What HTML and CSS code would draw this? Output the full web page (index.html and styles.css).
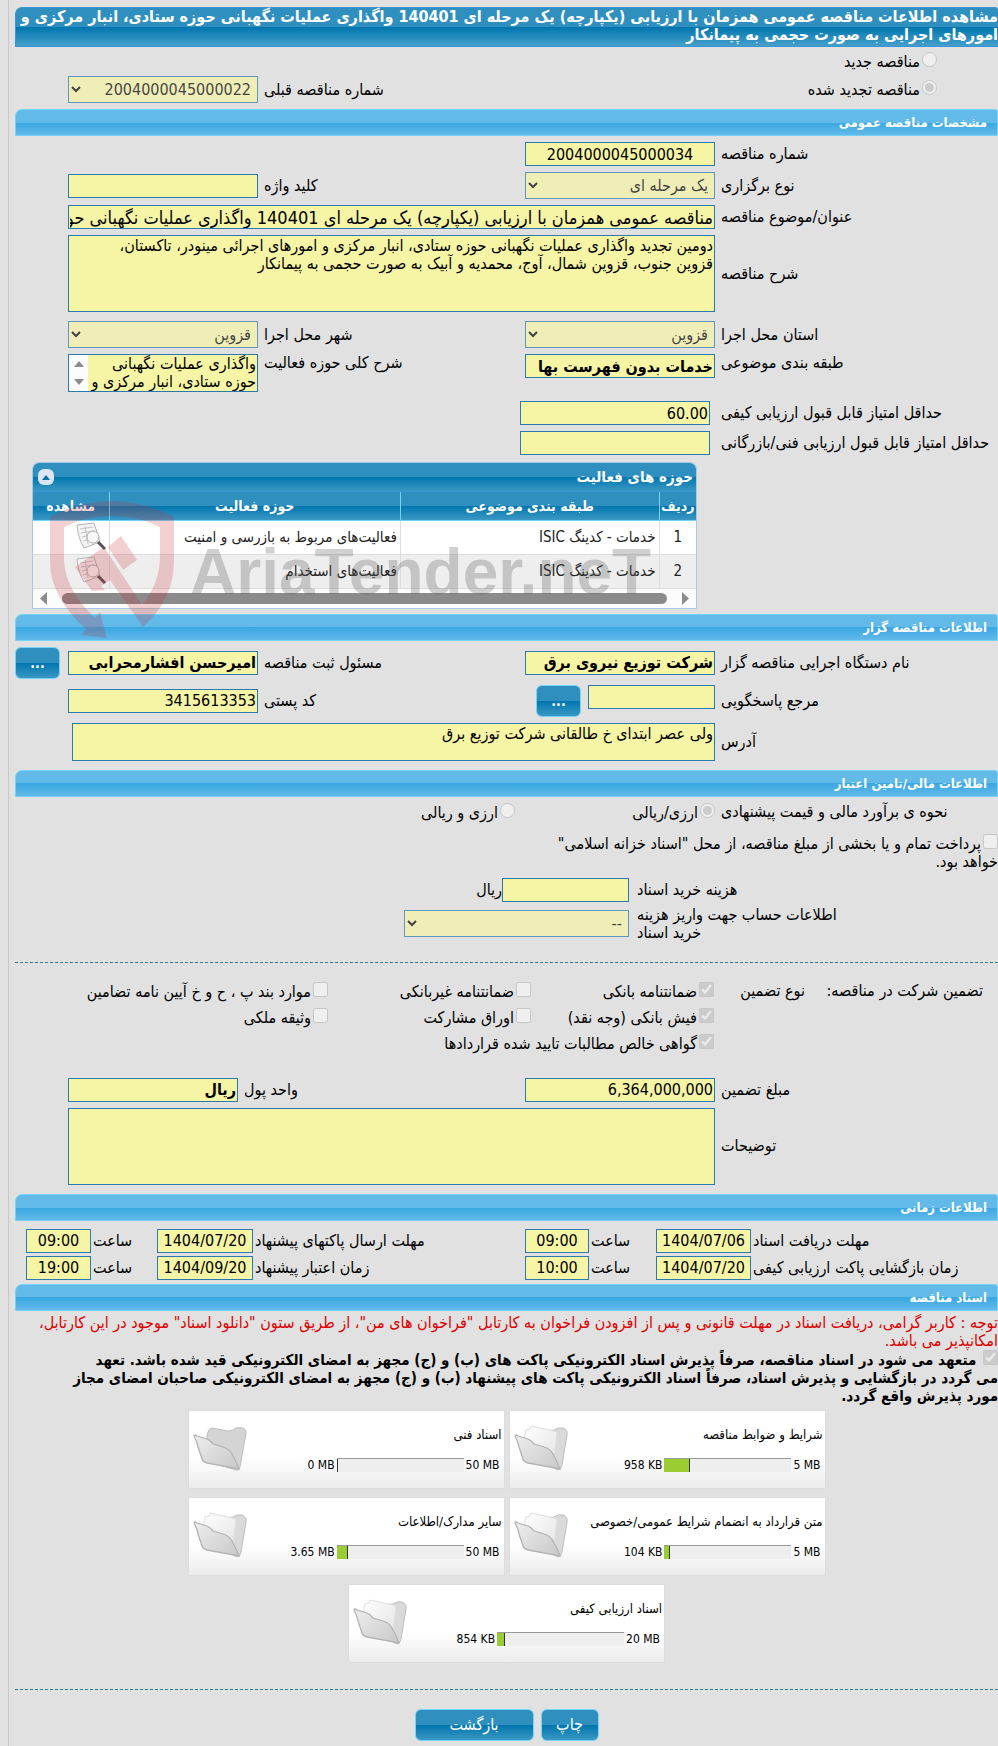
FILE: index.html
```html
<!DOCTYPE html>
<html lang="fa" dir="rtl">
<head>
    <meta charset="UTF-8">
    <meta name="viewport" content="width=device-width, initial-scale=1.0">
    <title>مشاهده اطلاعات مناقصه</title>
    <link rel="stylesheet" href="styles.css">
</head>
<body>
    <svg class="defs" aria-hidden="true">
        <defs>
            <linearGradient id="paper" x1="0" y1="0" x2="1" y2="1">
                <stop offset="0" stop-color="#ffffff"/>
                <stop offset="1" stop-color="#e4e4e4"/>
            </linearGradient>
            <linearGradient id="cover" x1="0" y1="0" x2="1" y2="1">
                <stop offset="0" stop-color="#eeeeee"/>
                <stop offset="1" stop-color="#c8c8c8"/>
            </linearGradient>
        </defs>
        <symbol id="folder" viewBox="0 0 54 48">
            <path d="M30 6 L40 5 Q44 2 49 3 Q54 5 53 10 L48 40 Q47 45 44 45 L38 42 Z" fill="#dadada" stroke="#bdbdbd"/>
            <path d="M10 14 L12 5 L16 4 L17 1 L40 6 Q43 6 43 9 L40 34 Z" fill="url(#paper)" stroke="#dedede"/>
            <path d="M1 11 Q1 9 4 11 L14 14 Q17 15 20 19 L30 22 Q37 24 40 31 Q43 36 46 44 L14 38 Q10 37 9 34 L5 22 Q4 16 1 11 Z" fill="url(#cover)" stroke="#b3b3b3" stroke-width="1.3"/>
        </symbol>
        <symbol id="folder-empty" viewBox="0 0 54 48">
            <path d="M14 12 Q15 3 19 3 L35 6 Q40 6 43 3 Q53 1 53 8 L47 42 Q46 46 43 45 L13 36 Z" fill="#d4d4d4" stroke="#bdbdbd"/>
            <path d="M1 11 Q1 9 4 11 L14 14 Q17 15 20 19 L30 22 Q37 24 40 31 Q43 36 46 44 L14 38 Q10 37 9 34 L5 22 Q4 16 1 11 Z" fill="url(#cover)" stroke="#b3b3b3" stroke-width="1.3"/>
        </symbol>
        <symbol id="view" viewBox="0 0 30 30">
            <path d="M1 3 L18 1 L24 20 L8 26 Q2 16 1 3 Z" fill="#f4f4f4" stroke="#b5b5b5"/>
            <path d="M4 7 L17 5 M5 11 L18 9 M6 15 L14 13 M7 19 L14 17 M9 4 L12 22" stroke="#c4c4c4" fill="none"/>
            <circle cx="17" cy="15" r="6" fill="#f8f8f8" stroke="#b0b0b0"/>
            <path d="M22 20 L29 27" stroke="#555555" stroke-width="3"/>
        </symbol>
    </svg>

    <main class="page">
        <h1 class="title">مشاهده اطلاعات مناقصه عمومی همزمان با ارزیابی (یکپارچه) یک مرحله ای 140401 واگذاری عملیات نگهبانی حوزه ستادی، انبار مرکزی و<br>امورهای اجرایی به صورت حجمی به پیمانکار</h1>

        <div class="kind">
            <label><input type="radio" name="kind" disabled>مناقصه جدید</label>
        </div>
        <div class="row kind-row">
            <div class="kind"><label><input type="radio" name="kind" checked disabled>مناقصه تجدید شده</label></div>
            <label class="lbl third" for="prev">شماره مناقصه قبلی</label>
            <select id="prev" disabled><option>2004000045000022</option></select>
        </div>

        <h2 class="section">مشخصات مناقصه عمومی</h2>
        <div class="row">
            <label class="lbl" for="num">شماره مناقصه</label>
            <input id="num" class="center" type="text" value="2004000045000034" readonly>
        </div>
        <div class="row">
            <label class="lbl" for="type">نوع برگزاری</label>
            <select id="type" disabled><option>یک مرحله ای</option></select>
            <label class="lbl" for="keyword">کلید واژه</label>
            <input id="keyword" type="text" readonly>
        </div>
        <div class="row">
            <label class="lbl" for="subject">عنوان/موضوع مناقصه</label>
            <input id="subject" class="wide subject" type="text" value="مناقصه عمومی همزمان با ارزیابی (یکپارچه) یک مرحله ای 140401 واگذاری عملیات نگهبانی حوزه ستادی، انبار مرکزی و امورهای اجرایی به صورت حجمی به پیمانکار" readonly>
        </div>
        <div class="row">
            <label class="lbl" for="desc">شرح مناقصه</label>
            <textarea id="desc" class="wide tall" readonly>دومین تجدید واگذاری عملیات نگهبانی حوزه ستادی، انبار مرکزی و امورهای اجرائی مینودر، تاکستان،
قزوین جنوب، قزوین شمال، آوج، محمدیه و آبیک به صورت حجمی به پیمانکار</textarea>
        </div>
        <div class="row places">
            <label class="lbl" for="province">استان محل اجرا</label>
            <select id="province" disabled><option>قزوین</option></select>
            <label class="lbl" for="city">شهر محل اجرا</label>
            <select id="city" disabled><option>قزوین</option></select>
        </div>
        <div class="row top">
            <label class="lbl" for="cat">طبقه بندی موضوعی</label>
            <input id="cat" class="strong" type="text" value="خدمات بدون فهرست بها" readonly>
            <label class="lbl" for="scope">شرح کلی حوزه فعالیت</label>
            <div class="scroller">
                <textarea id="scope" readonly>واگذاری عملیات نگهبانی حوزه ستادی، انبار مرکزی و</textarea>
                <div class="arrows">
                    <svg width="10" height="6" viewBox="0 0 10 6"><path d="M0 6 L5 0 L10 6 Z"/></svg>
                    <svg width="10" height="6" viewBox="0 0 10 6"><path d="M0 0 L5 6 L10 0 Z"/></svg>
                </div>
            </div>
        </div>
        <div class="row score">
            <label class="lbl" for="minq">حداقل امتیاز قابل قبول ارزیابی کیفی</label>
            <input id="minq" type="text" value="60.00" readonly>
        </div>
        <div class="row score">
            <label class="lbl" for="mint">حداقل امتیاز قابل قبول ارزیابی فنی/بازرگانی</label>
            <input id="mint" type="text" readonly>
        </div>

        <div class="panel">
            <div class="panel-head">
                <span>حوزه های فعالیت</span>
                <button class="fold" type="button" aria-label="بستن"><svg width="8" height="5" viewBox="0 0 8 5"><path d="M0 5 L4 0 L8 5 Z" fill="#0a6fa6"/></svg></button>
            </div>
            <table class="grid">
                <thead>
                    <tr><th class="c1">ردیف</th><th class="c2">طبقه بندی موضوعی</th><th class="c3">حوزه فعالیت</th><th class="c4">مشاهده</th></tr>
                </thead>
                <tbody>
                    <tr><td class="center">1</td><td>خدمات - کدینگ ISIC</td><td>فعالیت‌های مربوط به بازرسی و امنیت</td><td class="icon"><svg width="30" height="30"><use href="#view"/></svg></td></tr>
                    <tr><td class="center">2</td><td>خدمات - کدینگ ISIC</td><td>فعالیت‌های استخدام</td><td class="icon"><svg width="30" height="30"><use href="#view"/></svg></td></tr>
                </tbody>
            </table>
            <div class="hscroll">
                <svg width="7" height="13" viewBox="0 0 7 13"><path d="M0 0 L7 6.5 L0 13 Z"/></svg>
                <div class="thumb"></div>
                <svg width="7" height="13" viewBox="0 0 7 13"><path d="M7 0 L0 6.5 L7 13 Z"/></svg>
            </div>
            <div class="watermark" aria-hidden="true">
                <svg width="125" height="138" viewBox="50 499 125 138">
                    <path d="M50 516 Q80 500 112 500 Q144 500 174 516 V560 Q174 598 143 626 L110 579 L101 585 L105 589 L92 590 L75 566 L104 546 L108 552 L142 604 Q160 582 160 555 V526 Q138 515 112 515 Q86 515 64 526 V560 Q66 590 95 617 L100 611 L107 637 L81 634 L86 628 Q50 596 50 560 Z"/>
                    <path d="M108 546 L121 535 L137 559 L123 569 Z"/>
                </svg>
                <span>AriaTender.neT</span>
            </div>
        </div>

        <h2 class="section">اطلاعات مناقصه گزار</h2>
        <div class="row owner">
            <label class="lbl" for="org">نام دستگاه اجرایی مناقصه گزار</label>
            <input id="org" class="strong" type="text" value="شرکت توزیع نیروی برق" readonly>
            <label class="lbl" for="reg">مسئول ثبت مناقصه</label>
            <input id="reg" class="strong" type="text" value="امیرحسن افشارمحرابی" readonly>
            <div class="more"><button class="btn dots" type="button">...</button></div>
        </div>
        <div class="row owner">
            <label class="lbl" for="ref">مرجع پاسخگویی</label>
            <div class="ref"><input id="ref" type="text" readonly><button class="btn dots" type="button">...</button></div>
            <label class="lbl" for="zip">کد پستی</label>
            <input id="zip" type="text" value="3415613353" readonly>
        </div>
        <div class="row address">
            <label class="lbl" for="addr">آدرس</label>
            <textarea id="addr" class="wide" readonly>ولی عصر ابتدای خ طالقانی شرکت توزیع برق</textarea>
        </div>

        <h2 class="section">اطلاعات مالی/تامین اعتبار</h2>
        <div class="row estimate">
            <span class="lbl">نحوه ی برآورد مالی و قیمت پیشنهادی</span>
            <label><input type="radio" name="cur" checked disabled>ارزی/ریالی</label>
            <label><input type="radio" name="cur" disabled>ارزی و ریالی</label>
        </div>
        <div class="treasury">
            <label><input type="checkbox" disabled>پرداخت تمام و یا بخشی از مبلغ مناقصه، از محل "اسناد خزانه اسلامی" خواهد بود.</label>
        </div>
        <div class="fee">
            <label class="lbl" for="cost">هزینه خرید اسناد</label>
            <div class="money"><input id="cost" type="text" readonly><span>ریال</span></div>
        </div>
        <div class="fee">
            <label class="lbl" for="account">اطلاعات حساب جهت واریز هزینه خرید اسناد</label>
            <select id="account" disabled><option>--</option></select>
        </div>
        <hr class="line">

        <div class="guarantee">
            <span>تضمین شرکت در مناقصه:</span>
            <span class="g-type">نوع تضمین</span>
            <label><input type="checkbox" checked disabled>ضمانتنامه بانکی</label>
            <label><input type="checkbox" disabled>ضمانتنامه غیربانکی</label>
            <label><input type="checkbox" disabled>موارد بند پ ، ح و خ آیین نامه تضامین</label>
            <label class="first"><input type="checkbox" checked disabled>فیش بانکی (وجه نقد)</label>
            <label><input type="checkbox" disabled>اوراق مشارکت</label>
            <label><input type="checkbox" disabled>وثیقه ملکی</label>
            <label class="first long"><input type="checkbox" checked disabled>گواهی خالص مطالبات تایید شده قراردادها</label>
        </div>
        <div class="row amount">
            <label class="lbl" for="amount">مبلغ تضمین</label>
            <input id="amount" type="text" value="6,364,000,000" readonly>
            <label class="lbl" for="unit">واحد پول</label>
            <input id="unit" class="strong" type="text" value="ریال" readonly>
        </div>
        <div class="row notes">
            <label class="lbl" for="notes">توضیحات</label>
            <textarea id="notes" class="wide tall" readonly></textarea>
        </div>

        <h2 class="section">اطلاعات زمانی</h2>
        <div class="times">
            <label class="lbl" for="d1">مهلت دریافت اسناد</label><input id="d1" type="text" value="1404/07/06" readonly>
            <label class="lbl" for="h1">ساعت</label><input id="h1" type="text" value="09:00" readonly>
            <label class="lbl" for="d2">مهلت ارسال پاکتهای پیشنهاد</label><input id="d2" type="text" value="1404/07/20" readonly>
            <label class="lbl" for="h2">ساعت</label><input id="h2" type="text" value="09:00" readonly>
            <label class="lbl" for="d3">زمان بازگشایی پاکت ارزیابی کیفی</label><input id="d3" type="text" value="1404/07/20" readonly>
            <label class="lbl" for="h3">ساعت</label><input id="h3" type="text" value="10:00" readonly>
            <label class="lbl" for="d4">زمان اعتبار پیشنهاد</label><input id="d4" type="text" value="1404/09/20" readonly>
            <label class="lbl" for="h4">ساعت</label><input id="h4" type="text" value="19:00" readonly>
        </div>

        <h2 class="section docs-title">اسناد مناقصه</h2>
        <p class="notice">توجه : کاربر گرامی، دریافت اسناد در مهلت قانونی و پس از افزودن فراخوان به کارتابل "فراخوان های من"، از طریق ستون "دانلود اسناد" موجود در این کارتابل، امکانپذیر می باشد.</p>
        <label class="commit"><input type="checkbox" checked disabled> متعهد می شود در اسناد مناقصه، صرفاً پذیرش اسناد الکترونیکی پاکت های (ب) و (ج) مجهز به امضای الکترونیکی قید شده باشد. تعهد<br>می گردد در بازگشایی و پذیرش اسناد، صرفاً اسناد الکترونیکی پاکت های پیشنهاد (ب) و (ج) مجهز به امضای الکترونیکی صاحبان امضای مجاز<br>مورد پذیرش واقع گردد.</label>

        <div class="docs">
            <div class="doc">
                <svg class="folder"><use href="#folder"/></svg>
                <div class="doc-body"><span class="doc-name">شرایط و ضوابط مناقصه</span>
                    <div class="usage"><span>958 KB</span><div class="bar"><div class="fill" style="width: 20%"></div></div><span>5 MB</span></div></div>
            </div>
            <div class="doc">
                <svg class="folder"><use href="#folder-empty"/></svg>
                <div class="doc-body"><span class="doc-name">اسناد فنی</span>
                    <div class="usage"><span>0 MB</span><div class="bar"><div class="fill" style="width: 1%"></div></div><span>50 MB</span></div></div>
            </div>
            <div class="doc">
                <svg class="folder"><use href="#folder"/></svg>
                <div class="doc-body"><span class="doc-name">متن قرارداد به انضمام شرایط عمومی/خصوصی</span>
                    <div class="usage"><span>104 KB</span><div class="bar"><div class="fill" style="width: 4%"></div></div><span>5 MB</span></div></div>
            </div>
            <div class="doc">
                <svg class="folder"><use href="#folder"/></svg>
                <div class="doc-body"><span class="doc-name">سایر مدارک/اطلاعات</span>
                    <div class="usage"><span>3.65 MB</span><div class="bar"><div class="fill" style="width: 9%"></div></div><span>50 MB</span></div></div>
            </div>
            <div class="doc">
                <svg class="folder"><use href="#folder"/></svg>
                <div class="doc-body"><span class="doc-name">اسناد ارزیابی کیفی</span>
                    <div class="usage"><span>854 KB</span><div class="bar"><div class="fill" style="width: 6%"></div></div><span>20 MB</span></div></div>
            </div>
        </div>
        <hr class="line">
        <div class="buttons">
            <button class="btn" type="button">چاپ</button>
            <button class="btn back" type="button">بازگشت</button>
        </div>
    </main>
</body>
</html>
```

FILE: styles.css
```css
* {
    margin: 0;
    padding: 0;
    box-sizing: border-box;
}
body {
    background: #e1e1e1;
    color: #000;
    font-family: "DejaVu Sans Condensed", "DejaVu Sans", sans-serif;
    font-size: 16px;
    line-height: 18px;
    padding-left: 8px;
}
.defs {
    position: absolute;
    width: 0;
    height: 0;
}
.page {
    border-left: 1px solid #c8c8c8;
    padding: 7px 0 5px 6px;
}
.title {
    background: linear-gradient(#2f90bf 50%, #0076ae 50%, #459fca);
    border: 1px solid #3a94d4;
    border-right: none;
    border-radius: 7px 3px 0 0;
    color: white;
    font-size: 16px;
    line-height: 18px;
    padding-bottom: 2px;
}
.section {
    background: linear-gradient(#62bae9 50%, #38a7e2 50%, #62bae9);
    border: 1px solid #74d3f7;
    border-radius: 7px 3px 0 0;
    color: white;
    font-size: 13px;
    line-height: 25px;
    padding-right: 10px;
    margin-bottom: 6px;
}
input, select, textarea, button {
    font-family: inherit;
    font-size: 16px;
}
input[type="text"], select, textarea {
    background: #f6f4a5;
    border: 1px solid #2a7ab0;
    border-radius: 0;
    color: #000;
    width: 100%;
    min-width: 0;
}
input[type="text"] {
    height: 24px;
    padding: 0 1px;
}
select {
    height: 27px;
    padding: 0 2px;
}
select:disabled {
    color: #000;
    opacity: 0.7;
}
textarea {
    display: block;
    line-height: 18px;
    height: 38px;
    padding: 1px;
    resize: none;
    overflow: hidden;
}
input[type="radio"], input[type="checkbox"] {
    width: 15px;
    height: 15px;
    margin-left: 2px;
    vertical-align: 0;
}
.row {
    display: grid;
    grid-template-columns: 283fr 190fr 267fr 190fr 53fr;
    align-items: center;
    margin-bottom: 6px;
}
.lbl {
    text-align: left;
    padding-left: 6px;
}
.wide {
    grid-column: 2 / 5;
}
.tall {
    height: 77px;
}
input.strong {
    font-weight: bold;
}
input.subject {
    font-size: 18px;
}
.center {
    text-align: center;
}
.top {
    align-items: start;
    margin-bottom: 9px;
}
.kind {
    padding: 5px 61px 5px 0;
}
.kind-row .kind {
    padding-top: 0;
    padding-bottom: 0;
}
.third {
    grid-column: 3;
}
.places {
    margin-top: 9px;
}
.scroller {
    display: flex;
    border: 1px solid #2a7ab0;
}
.scroller textarea {
    border: none;
    height: 36px;
    padding: 0 1px;
    flex: 1;
}
.arrows {
    background: #fcfcfc;
    width: 19px;
    display: flex;
    flex-direction: column;
    align-items: center;
    justify-content: space-around;
}
.arrows svg, .hscroll svg {
    fill: #8b8b8b;
}
.score {
    grid-template-columns: 288fr 190fr 505fr;
}
.score .lbl {
    padding-left: 11px;
}

.panel {
    position: relative;
    margin: 7px 301px 5px 17px;
    border: 1px solid #a3c9e6;
    border-radius: 7px 7px 0 0;
    background: #fcfcfc;
}
.panel-head {
    display: flex;
    justify-content: space-between;
    align-items: center;
    height: 29px;
    padding: 0 3px 0 5px;
    border-radius: 6px 6px 0 0;
    background: linear-gradient(#2f90bf 50%, #0076ae 50%, #3b97c3);
    border-bottom: 1px solid #3a94d4;
    color: white;
    font-size: 15px;
    font-weight: bold;
}
.fold {
    display: flex;
    align-items: center;
    justify-content: center;
    width: 16px;
    height: 16px;
    border: none;
    border-radius: 6px;
    background: #dbe6f5;
}
.grid {
    width: 100%;
    table-layout: fixed;
    border-collapse: collapse;
    font-size: 15px;
}
.grid thead tr {
    background: linear-gradient(#2f90bf 50%, #0076ae 50%, #3b97c3);
}
.grid th {
    color: white;
    font-size: 14px;
    height: 28px;
    border-left: 1px solid #74d3f7;
    border-bottom: 1px solid #74d3f7;
}
.c1 { width: 37px; }
.c2 { width: 39%; }
.c4 { width: 76px; }
.grid td {
    height: 34px;
    padding: 0 3px;
    border-left: 1px solid #ddd;
    border-bottom: 1px solid #ddd;
    color: #222;
    background: white;
}
.grid tr:nth-child(2) td {
    background: #eee;
}
.grid th:last-child, .grid td:last-child {
    border-left: none;
}
.grid .icon {
    text-align: right;
}
.grid .icon svg {
    display: block;
}
.hscroll {
    display: flex;
    align-items: center;
    gap: 15px;
    height: 19px;
    padding: 0 7px;
}
.thumb {
    flex: 1;
    height: 11px;
    border-radius: 6px;
    background: #8b8b8b;
}
.watermark {
    position: absolute;
    left: 17px;
    top: 37px;
    direction: ltr;
    display: flex;
    gap: 15px;
    pointer-events: none;
    color: rgba(90, 90, 90, 0.28);
    font: bold 64px/100px "Liberation Sans", sans-serif;
}
.watermark svg {
    fill: rgba(200, 40, 50, 0.22);
}
.watermark span {
    padding-top: 22px;
}

.btn {
    min-width: 58px;
    height: 32px;
    border: 1px solid #74d3f7;
    border-radius: 6px;
    background: linear-gradient(#2f90bf 50%, #0076ae 50%, #3b97c3);
    color: white;
}
.dots {
    min-width: 0;
    width: 45px;
    flex: none;
    font-weight: bold;
    font-size: 14px;
}
.owner {
    min-height: 32px;
}
.ref {
    display: flex;
    align-items: start;
    gap: 7px;
}
.ref input {
    width: 127px;
}
.more {
    text-align: left;
}
.address {
    grid-template-columns: 283fr 190fr 267fr 186fr 57fr;
    margin-bottom: 9px;
}
.estimate {
    grid-template-columns: 283fr 200fr 500fr;
    margin-bottom: 12px;
}
.treasury {
    max-width: 480px;
    margin-bottom: 7px;
}
.fee {
    display: grid;
    grid-template-columns: 369fr 225fr 389fr;
    align-items: center;
    margin-bottom: 4px;
}
.fee .lbl {
    padding-left: 8px;
    padding-right: 140px;
}
.money {
    display: flex;
    align-items: center;
}
.money input {
    width: 127px;
}
.line {
    border: none;
    border-top: 1px dashed #2a7ab0;
    margin: 20px 0 19px;
}
.guarantee {
    display: grid;
    grid-template-columns: 168fr 101fr 183fr 203fr 313fr;
    row-gap: 7px;
    padding-right: 15px;
    margin-bottom: 25px;
}
.g-type {
    padding-right: 10px;
}
.guarantee .first {
    grid-column: 3;
}
.guarantee .long {
    grid-column: 3 / 5;
}
.amount {
    grid-template-columns: 283fr 190fr 287fr 170fr 53fr;
}
.notes {
    margin-bottom: 9px;
}
.times {
    display: grid;
    grid-template-columns: 247fr 95fr 67fr 64fr 272fr 96fr 66fr 65fr;
    row-gap: 3px;
    align-items: center;
    padding-left: 11px;
    margin: 8px 0 4px;
}
.times .lbl {
    padding-left: 2px;
}
.times input {
    text-align: center;
}
.docs-title {
    margin-bottom: 3px;
}
.notice {
    color: #dd0000;
}
.commit {
    display: block;
    font-size: 15px;
    font-weight: bold;
}
.docs {
    display: flex;
    flex-wrap: wrap;
    justify-content: center;
    gap: 8px 4px;
    max-width: 640px;
    margin: 5px auto 26px;
}
.doc {
    display: flex;
    flex-direction: row-reverse;
    align-items: center;
    width: 317px;
    height: 79px;
    padding: 0 2px 0 4px;
    border: 1px solid #ddd;
    background: linear-gradient(white 60%, #ececec);
    font-size: 12px;
}
.folder {
    width: 54px;
    height: 48px;
    flex: none;
}
.doc-body {
    flex: 1;
    display: flex;
    flex-direction: column;
    gap: 14px;
}
.doc-name {
    font-size: 13px;
}
.usage {
    direction: ltr;
    display: flex;
    justify-content: flex-end;
    align-items: center;
    gap: 2px;
    padding-right: 2px;
    line-height: 15px;
}
.bar {
    width: 127px;
    height: 14px;
    background: #eee;
    border-top: 1px solid #999;
}
.fill {
    height: 100%;
    background: #9acd32;
    border-right: 1px solid #333;
}
.buttons {
    display: flex;
    justify-content: center;
    gap: 7px;
}
.back {
    min-width: 119px;
}
```
